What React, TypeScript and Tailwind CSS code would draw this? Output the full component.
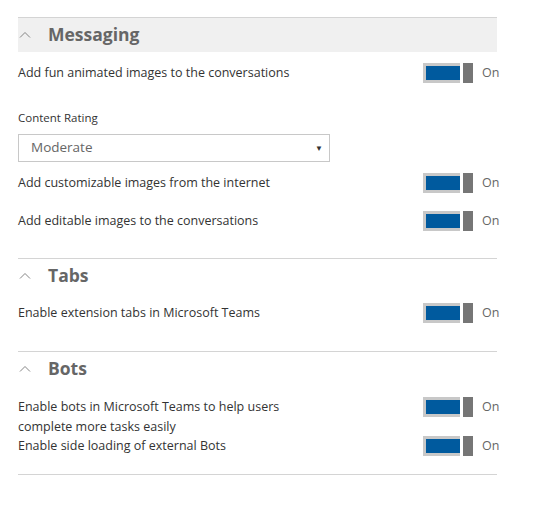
import React from 'react';

const font = { fontFamily: '"Segoe UI", "Open Sans", sans-serif' };

function Chevron() {
  return (
    <svg width="12" height="8" viewBox="0 0 12 8" className="shrink-0 ml-[1px]">
      <polyline points="1,6.5 6,1.5 11,6.5" fill="none" stroke="#777777" strokeWidth="0.9" />
    </svg>
  );
}

function SectionHeader({ title, shaded }: { title: string; shaded?: boolean }) {
  return (
    <div className={`h-[34px] flex items-center ${shaded ? 'bg-[#f0f0f0]' : ''}`}>
      <Chevron />
      <span className="ml-[17px] text-[17.5px] font-bold text-[#666666] leading-none">{title}</span>
    </div>
  );
}

function Toggle() {
  return (
    <div className="w-[74px] shrink-0 flex items-center h-[20px] whitespace-nowrap">
      <div className="w-[37px] h-[20px] border-t-[3px] border-b-[3px] border-l-[3px] border-[#c8c8c8] bg-[#005a9e] shrink-0" />
      <div className="w-[10px] h-[20px] ml-[3px] bg-[#767676] shrink-0" />
      <span className="ml-[9px] text-[12.5px] text-[#666666]">On</span>
    </div>
  );
}

function Row({ label, className = '' }: { label: React.ReactNode; className?: string }) {
  return (
    <div className={`flex items-start justify-between ${className}`}>
      <div className="text-[12.5px] leading-[20px] text-[#333333]">{label}</div>
      <Toggle />
    </div>
  );
}

export default function App() {
  return (
    <div className="w-[534px] h-[523px] bg-white pt-[17px] pl-[18px]" style={font}>
      <div className="w-[479px]">
        <section className="border-t border-[#d4d4d4]">
          <SectionHeader title="Messaging" shaded />
          <Row className="mt-[11px]" label="Add fun animated images to the conversations" />
          <div className="mt-[27px] text-[11.5px] leading-[16px] text-[#333333]">Content Rating</div>
          <div className="mt-[8px] w-[312px] h-[28px] border border-[#c8c8c8] flex items-center justify-between pl-[12px] pr-[6px]">
            <span className="text-[13.5px] leading-[18px] text-[#666666] -mt-[3px]">Moderate</span>
            <span className="text-[8px] text-[#333333]">▼</span>
          </div>
          <Row className="mt-[11px]" label="Add customizable images from the internet" />
          <Row className="mt-[18px]" label="Add editable images to the conversations" />
        </section>
        <section className="mt-[27px] border-t border-[#d4d4d4]">
          <SectionHeader title="Tabs" />
          <Row className="mt-[10px]" label="Enable extension tabs in Microsoft Teams" />
        </section>
        <section className="mt-[28px] border-t border-[#d4d4d4]">
          <SectionHeader title="Bots" />
          <Row
            className="mt-[11px]"
            label={
              <>
                Enable bots in Microsoft Teams to help users
                <br />
                complete more tasks easily
              </>
            }
          />
          <Row className="-mt-[1px]" label="Enable side loading of external Bots" />
        </section>
        <div className="mt-[18px] border-t border-[#d4d4d4]" />
      </div>
    </div>
  );
}
